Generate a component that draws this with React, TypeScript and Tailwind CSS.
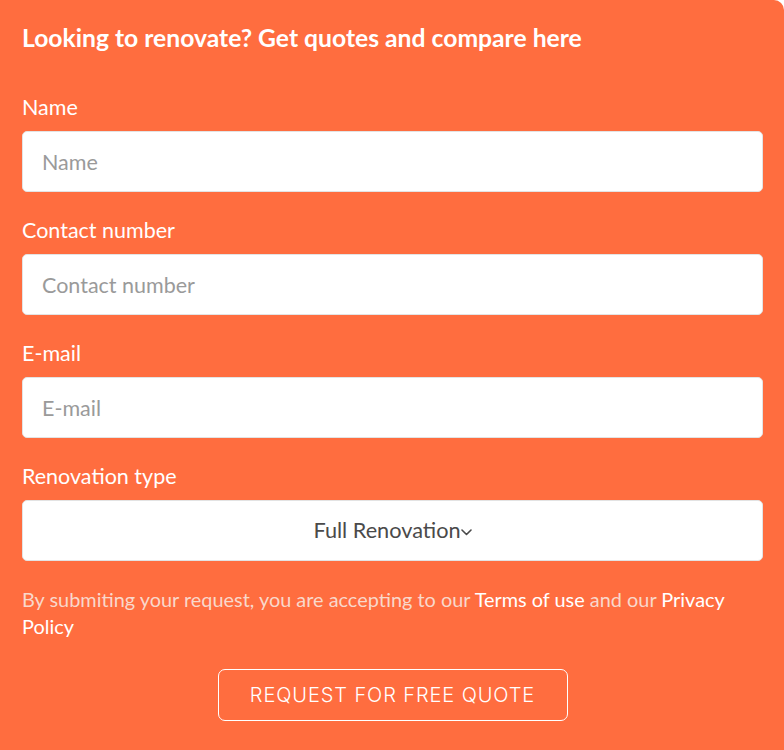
export default function App() {
  const fields = [
    { label: "Name", placeholder: "Name", type: "text" },
    { label: "Contact number", placeholder: "Contact number", type: "tel" },
    { label: "E-mail", placeholder: "E-mail", type: "email" },
  ];

  return (
    <div className="min-h-[750px] w-[784px] bg-[#ff6d3f] rounded-tr-[10px] pl-[22px] pr-[21px] pt-[22px] pb-10 font-['Lato',sans-serif] text-white">
      <h1 className="text-[24.7px] leading-[32px] font-bold">
        Looking to renovate? Get quotes and compare here
      </h1>

      <form className="mt-[39px] flex flex-col gap-[24px]" onSubmit={(e) => e.preventDefault()}>
        {fields.map((f) => (
          <label key={f.label} className="flex flex-col gap-[10px]">
            <span className="text-[21.5px] leading-[28px]">{f.label}</span>
            <input
              type={f.type}
              placeholder={f.placeholder}
              className="h-[61px] w-full rounded-[5px] border border-[#e3e3e3] bg-white px-[19px] text-[21.5px] text-[#444] placeholder:text-[#9a9a9a] outline-none"
            />
          </label>
        ))}

        <div className="flex flex-col gap-[10px]">
          <span className="text-[21.5px] leading-[28px]">Renovation type</span>
          <div className="flex h-[61px] w-full items-center justify-center rounded-[5px] border border-[#e3e3e3] bg-white text-[21.7px] text-[#4a4a4a]">
            Full Renovation
            <svg width="11" height="7" viewBox="0 0 11 7" className="mt-[3px]" fill="none">
              <path d="M1 1l4.5 4.5L10 1" stroke="#4a4a4a" strokeWidth="1.6" strokeLinecap="round" strokeLinejoin="round" />
            </svg>
          </div>
        </div>

        <p className="mt-[1px] text-[19.9px] leading-[27px] text-[#f9d8cb]">
          By submiting your request, you are accepting to our{" "}
          <a href="#" className="text-white">Terms of use</a> and our{" "}
          <a href="#" className="text-white">Privacy Policy</a>
        </p>

        <div className="mt-[5px] flex justify-center">
          <button
            type="submit"
            className="h-[52px] w-[350px] rounded-[7px] border-[1.5px] border-white font-['Inter',sans-serif] text-[20px] font-light tracking-[0.9px] text-white"
          >
            REQUEST FOR FREE QUOTE
          </button>
        </div>
      </form>
    </div>
  );
}
